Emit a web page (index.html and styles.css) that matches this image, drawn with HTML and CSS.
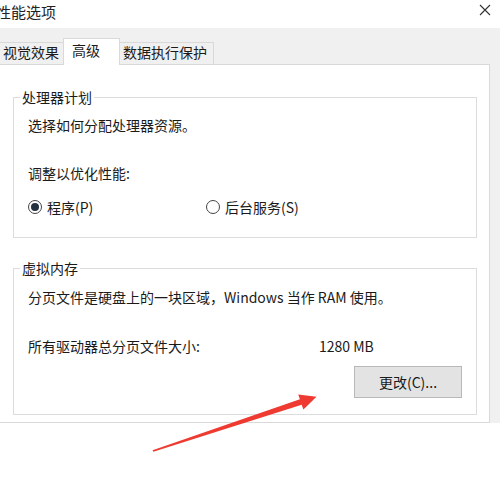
FILE: index.html
```html
<!DOCTYPE html>
<html lang="zh-CN">
<head>
  <meta charset="UTF-8">
  <title>性能选项</title>
  <link rel="stylesheet" href="styles.css">
</head>
<body>

  <div class="titlebar">
    <span class="title">性能选项</span>
    <svg class="close" width="12" height="12" viewBox="0 0 12 12">
      <path d="M1 1 L11 11 M11 1 L1 11" stroke="#333" stroke-width="1.1" fill="none"/>
    </svg>
  </div>

  <div class="dialog">
    <div class="tabs">
      <div class="tab tab-first">视觉效果</div>
      <div class="tab active">高级</div>
      <div class="tab tab-last">数据执行保护</div>
    </div>

    <div class="panel">
      <fieldset class="group group-cpu">
        <legend>处理器计划</legend>
        <p class="desc">选择如何分配处理器资源。</p>
        <p class="sub">调整以优化性能:</p>
        <div class="radio-row">
          <label class="radio radio-first"><span class="dot checked"></span>程序(P)</label>
          <label class="radio"><span class="dot"></span>后台服务(S)</label>
        </div>
      </fieldset>

      <fieldset class="group group-mem">
        <legend>虚拟内存</legend>
        <p class="desc">分页文件是硬盘上的一块区域，Windows 当作 RAM 使用。</p>
        <div class="size-row">
          <span class="size-label">所有驱动器总分页文件大小:</span>
          <span>1280 MB</span>
        </div>
        <div class="button-row">
          <button class="change-button">更改(C)...</button>
        </div>
      </fieldset>
    </div>
  </div>

  <!-- red annotation arrow -->
  <svg class="arrow" width="500" height="484" viewBox="0 0 500 484">
    <polygon fill="#ee3a31"
      points="152.6,450.3 299.9,399.2 298.2,394.6 316.5,396.8 303.4,409.4 301.7,404.8 153.4,451.7"/>
  </svg>

</body>
</html>
```

FILE: styles.css
```css
body {
  margin: 0;
  width: 500px;
  height: 484px;
  overflow: hidden;
  position: relative;
  background-color: #ffffff;
  font-family: "Noto Sans CJK SC", "Noto Sans", sans-serif;
  font-size: 14px;
  line-height: 20px;
  color: #1a1a1a;
}

p {
  margin: 0;
}

.titlebar {
  height: 28px;
  display: flex;
  justify-content: space-between;
  align-items: flex-start;
  background-color: #ffffff;
}

.title {
  margin-top: 2px;
  margin-left: -4px;
  font-size: 15px;
  color: #222;
}

.close {
  margin-top: 4px;
  margin-right: 9px;
}

.dialog {
  background-color: #f0f0f0;
  padding-right: 10px;
}

.tabs {
  display: flex;
  align-items: flex-end;
  height: 36px;
  box-sizing: border-box;
  padding-top: 10px;
}

.tab {
  height: 22px;
  box-sizing: border-box;
  border: 1px solid #d9d9d9;
  border-bottom: none;
  background-color: #f0f0f0;
  line-height: 19px;
  white-space: nowrap;
}

.tab-first {
  margin-left: -1px;
  padding: 0 4px 0 3px;
  border-right: none;
}

.tab-last {
  padding: 0 6px 0 3px;
  border-left: none;
}

.tab.active {
  position: relative;
  z-index: 1;
  height: 27px;
  margin-bottom: -1px;
  padding: 0 19px 0 8px;
  background-color: #ffffff;
  line-height: 22px;
}

.panel {
  height: 359px;
  box-sizing: border-box;
  margin-left: -1px;
  border: 1px solid #d9d9d9;
  background-color: #ffffff;
  padding: 22px 12px 0 13px;
}

.group {
  margin: 0;
  padding: 0 14px;
  border: 1px solid #dcdcdc;
  min-width: 0;
}

.group legend {
  margin-left: -8px;
  padding: 0 2px;
  line-height: 20px;
}

.group-cpu {
  padding-bottom: 20px;
}

.group-mem {
  margin-top: 20px;
  padding-bottom: 16px;
}

.group .desc {
  margin-top: 8px;
}

.group-mem .desc {
  margin-top: 9px;
}

.sub {
  margin-top: 28px;
}

.radio-row {
  display: flex;
  margin-top: 14px;
}

.radio {
  display: flex;
  align-items: center;
  gap: 5px;
}

.radio-first {
  width: 178px;
}

.dot {
  width: 14px;
  height: 14px;
  box-sizing: border-box;
  border: 1px solid #444;
  border-radius: 50%;
  background-color: #fff;
  display: flex;
  justify-content: center;
  align-items: center;
}

.dot.checked::after {
  content: "";
  width: 8px;
  height: 8px;
  border-radius: 50%;
  background-color: #22303f;
}

.size-row {
  display: flex;
  margin-top: 29px;
}

.size-label {
  width: 291px;
}

.button-row {
  display: flex;
  justify-content: flex-end;
  margin-top: 10px;
}

.change-button {
  width: 108px;
  height: 32px;
  border: 1px solid #b9b9b9;
  background-color: #e3e3e3;
  font-family: inherit;
  font-size: 14px;
  color: #1a1a1a;
  padding: 0;
}

.arrow {
  position: absolute;
  left: 0;
  top: 0;
  pointer-events: none;
}
```
